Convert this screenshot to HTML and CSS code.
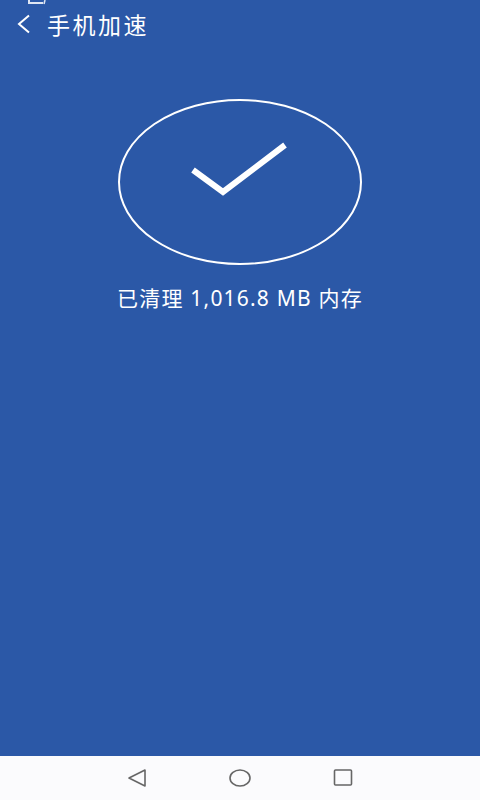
FILE: index.html
```html
<!DOCTYPE html>
<html lang="zh-CN">
<head>
    <meta charset="UTF-8">
    <meta name="viewport" content="width=device-width, initial-scale=1.0">
    <title>手机加速</title>
    <link rel="stylesheet" href="styles.css">
</head>
<body>
    <div class="screen">
        <!-- 状态栏残留 -->
        <div class="status">
            <svg width="20" height="6" viewBox="0 0 20 6">
                <path d="M2 0 V3 H16" stroke="#dfe6f3" stroke-width="2" fill="none"/>
                <path d="M18 0 L17 4" stroke="#dfe6f3" stroke-width="1.5" fill="none"/>
            </svg>
        </div>

        <header class="toolbar">
            <svg class="back" width="16" height="20" viewBox="0 0 16 20">
                <path d="M13 1.5 L3 10 L13 18.5" stroke="#fff" stroke-width="2" fill="none"/>
            </svg>
            <h1>手机加速</h1>
        </header>

        <main class="content">
            <div class="result">
                <svg width="246" height="168" viewBox="0 0 246 168">
                    <ellipse cx="123" cy="84" rx="121" ry="82" stroke="#fff" stroke-width="2" fill="none"/>
                    <path d="M76 72 L106 94 L168 47" stroke="#fff" stroke-width="6" fill="none"/>
                </svg>
            </div>
            <p class="summary">已清理 1,016.8 MB 内存</p>
        </main>

        <nav class="navbar">
            <svg width="20" height="20" viewBox="0 0 20 20">
                <path d="M18 2 L18 18 L2 10 Z" stroke="#666" stroke-width="1.6" fill="none" stroke-linejoin="round"/>
            </svg>
            <svg width="22" height="20" viewBox="0 0 22 20">
                <ellipse cx="11" cy="10" rx="10" ry="8" stroke="#666" stroke-width="1.6" fill="none"/>
            </svg>
            <svg width="20" height="20" viewBox="0 0 20 20">
                <rect x="1.5" y="2" width="17" height="15" rx="1" stroke="#666" stroke-width="1.6" fill="none"/>
            </svg>
        </nav>
    </div>
</body>
</html>
```

FILE: styles.css
```css
body {
    margin: 0;
    padding: 0;
    font-family: "Noto Sans", "Noto Sans CJK SC", sans-serif;
}
.screen {
    width: 480px;
    height: 800px;
    display: flex;
    flex-direction: column;
    background-color: #2b58a7;
    color: #fff;
}
.status {
    height: 6px;
    padding-left: 27px;
    line-height: 0;
}
.toolbar {
    height: 36px;
    display: flex;
    align-items: center;
    padding-left: 16px;
}
.back {
    margin-right: 15px;
}
.toolbar h1 {
    margin: 0;
    font-size: 23px;
    font-weight: normal;
    letter-spacing: 2.5px;
}
.content {
    flex: 1;
    display: flex;
    flex-direction: column;
    align-items: center;
    padding-top: 56px;
}
.result {
    line-height: 0;
}
.summary {
    margin: 16px 0 0;
    font-size: 21px;
    letter-spacing: 1.2px;
}
.navbar {
    height: 44px;
    background-color: #fbfbfd;
    display: flex;
    justify-content: center;
    align-items: center;
    gap: 82px;
}
```
